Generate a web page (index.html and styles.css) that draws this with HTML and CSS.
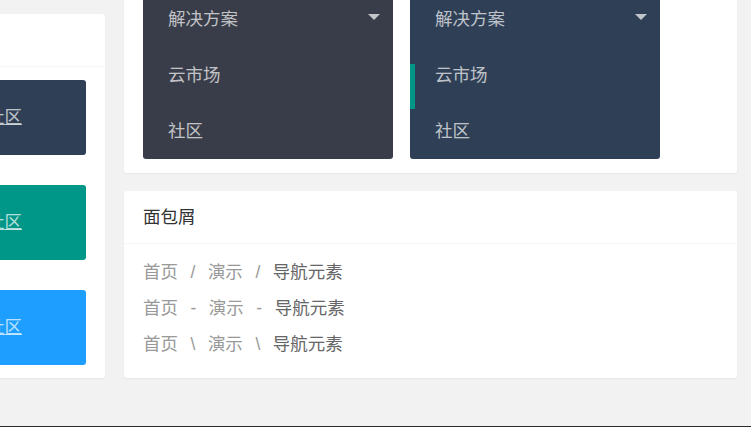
FILE: index.html
```html
<!DOCTYPE html>
<html lang="zh-CN">

<head>
    <meta charset="UTF-8">
    <meta name="viewport" content="width=device-width, initial-scale=1.0">
    <title>导航元素</title>
    <link rel="stylesheet" href="styles.css">
</head>

<body>
    <div class="page">
        <div class="col">
            <div class="card">
                <div class="card-header">水平导航</div>
                <div class="card-body stack">
                    <ul class="nav-h bg-cyan">
                        <li><a href="#">社区</a></li>
                    </ul>
                    <ul class="nav-h bg-green">
                        <li><a href="#">社区</a></li>
                    </ul>
                    <ul class="nav-h bg-blue">
                        <li><a href="#">社区</a></li>
                    </ul>
                </div>
            </div>
        </div>

        <div class="col">
            <div class="card">
                <div class="card-header">垂直导航</div>
                <div class="card-body trees">
                    <ul class="nav-tree">
                        <li><a href="#">产品</a></li>
                        <li><a href="#">解决方案<span class="more"></span></a></li>
                        <li><a href="#">云市场</a></li>
                        <li><a href="#">社区</a></li>
                    </ul>
                    <ul class="nav-tree bg-cyan">
                        <li><a href="#">产品</a></li>
                        <li><a href="#">解决方案<span class="more"></span></a></li>
                        <li><a href="#">云市场</a></li>
                        <li><a href="#">社区</a></li>
                        <span class="nav-bar"></span>
                    </ul>
                </div>
            </div>

            <div class="card">
                <div class="card-header">面包屑</div>
                <div class="card-body crumbs">
                    <div class="breadcrumb"><a href="#">首页</a><span class="sep">/</span><a href="#">演示</a><span class="sep">/</span><cite>导航元素</cite></div>
                    <div class="breadcrumb"><a href="#">首页</a><span class="sep">-</span><a href="#">演示</a><span class="sep">-</span><cite>导航元素</cite></div>
                    <div class="breadcrumb"><a href="#">首页</a><span class="sep">\</span><a href="#">演示</a><span class="sep">\</span><cite>导航元素</cite></div>
                </div>
            </div>
        </div>
    </div>
    <div class="edge"></div>
</body>

</html>
```

FILE: styles.css
```css
html,
body {
    margin: 0;
    height: 427px;
    overflow: hidden;
}

body {
    display: flex;
    flex-direction: column;
    justify-content: flex-end;
    background-color: #f2f2f2;
    font-family: "Liberation Sans", "Noto Sans CJK SC", sans-serif;
    font-size: 17.5px;
    color: #333;
}

ul {
    margin: 0;
    padding: 0;
    list-style: none;
}

a {
    color: inherit;
    text-decoration: none;
}

cite {
    font-style: normal;
}

.page {
    flex-shrink: 0;
    display: grid;
    grid-template-columns: 320px 613px;
    column-gap: 19px;
    align-items: end;
    margin-left: -215px;
    padding-bottom: 48px;
}

.col {
    display: flex;
    flex-direction: column;
    gap: 18px;
}

.edge {
    flex-shrink: 0;
    height: 1px;
    background-color: #2b2b2b;
}

/* card */

.card {
    background-color: #fff;
    border-radius: 3px;
    box-shadow: 0 1px 2px 0 rgba(0, 0, 0, .05);
}

.card-header {
    height: 52px;
    line-height: 52px;
    padding: 0 19px;
    border-bottom: 1px solid #f6f6f6;
}

.card-body {
    padding: 13px 19px;
}

.stack {
    display: flex;
    flex-direction: column;
    gap: 30px;
}

/* horizontal nav */

.nav-h {
    display: flex;
    justify-content: flex-end;
    height: 75px;
    padding-right: 64px;
    border-radius: 3px;
    color: rgba(255, 255, 255, .7);
}

.nav-h li {
    line-height: 75px;
}

.nav-h a {
    text-decoration: underline;
}

.bg-cyan {
    background-color: #2f4056;
}

.bg-green {
    background-color: #009688;
}

.bg-blue {
    background-color: #1e9fff;
}

/* vertical nav */

.trees {
    display: flex;
    gap: 17px;
    padding-bottom: 14px;
}

.nav-tree {
    position: relative;
    width: 250px;
    background-color: #393d49;
    border-radius: 3px;
    color: rgba(255, 255, 255, .7);
}

.nav-tree.bg-cyan {
    background-color: #2f4056;
}

.nav-tree li a {
    position: relative;
    display: block;
    height: 56px;
    line-height: 56px;
    padding: 0 25px;
}

.more {
    position: absolute;
    top: 23px;
    right: 13px;
    width: 0;
    height: 0;
    border: 6.5px solid transparent;
    border-top-color: rgba(255, 255, 255, .7);
}

.nav-bar {
    position: absolute;
    left: 0;
    top: 129px;
    width: 5px;
    height: 45px;
    background-color: #009688;
}

/* breadcrumb */

.crumbs {
    padding: 10px 19px 16px;
}

.breadcrumb {
    height: 36px;
    line-height: 36px;
    color: #999;
}

.sep {
    margin: 0 12.5px;
}

.breadcrumb cite {
    color: #666;
}
```
